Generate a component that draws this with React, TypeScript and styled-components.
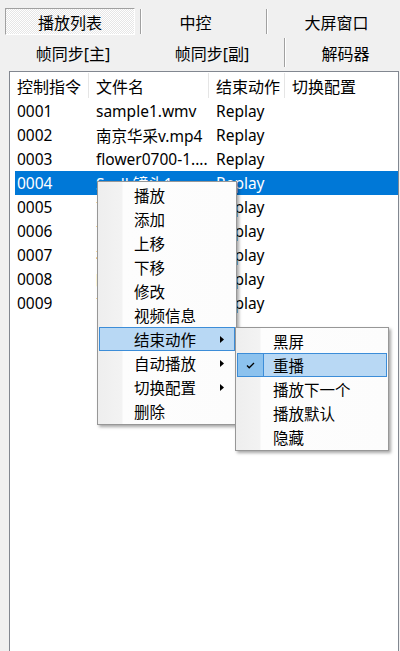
import styled, { createGlobalStyle } from "styled-components";

interface Clip {
  id: string;
  name: string;
  action: string;
}

const clips: Clip[] = [
  { id: "0001", name: "sample1.wmv", action: "Replay" },
  { id: "0002", name: "南京华采v.mp4", action: "Replay" },
  { id: "0003", name: "flower0700-1....", action: "Replay" },
  { id: "0004", name: "Scall 镜头1....", action: "Replay" },
  { id: "0005", name: "南京宣传片.mp4", action: "Replay" },
  { id: "0006", name: "南京夜景.mp4", action: "Replay" },
  { id: "0007", name: "视频素材.mp4", action: "Replay" },
  { id: "0008", name: "时代广场.mp4", action: "Replay" },
  { id: "0009", name: "南京片头.mp4", action: "Replay" },
];

const menuItems = [
  { label: "播放" },
  { label: "添加" },
  { label: "上移" },
  { label: "下移" },
  { label: "修改" },
  { label: "视频信息" },
  { label: "结束动作", sub: true, active: true },
  { label: "自动播放", sub: true },
  { label: "切换配置", sub: true },
  { label: "删除" },
];

const subItems = [
  { label: "黑屏" },
  { label: "重播", checked: true },
  { label: "播放下一个" },
  { label: "播放默认" },
  { label: "隐藏" },
];

const GlobalStyle = createGlobalStyle`
  body {
    margin: 0;
    background: #f0f0f0;
    font-family: "Segoe UI", "Noto Sans", "Noto Sans CJK SC", sans-serif;
    font-size: 15.5px;
    color: #000;
  }
`;

const Window = styled.div`
  position: relative;
  width: 400px;
  height: 651px;
  overflow: hidden;
  display: flex;
  flex-direction: column;
  background: #f0f0f0;
  box-sizing: border-box;
`;

const TabRow = styled.div<{ $top: number; $h: number }>`
  display: flex;
  margin-top: ${(p) => p.$top}px;
  height: ${(p) => p.$h}px;
  font-size: 16px;
`;

const TabCell = styled.div<{ $w: number; $divider?: boolean; $shift?: number }>`
  width: ${(p) => p.$w}px;
  flex: none;
  display: flex;
  align-items: center;
  justify-content: center;
  box-sizing: border-box;
  padding-left: ${(p) => Math.max(0, (p.$shift ?? 0) * 2)}px;
  padding-right: ${(p) => Math.max(0, -(p.$shift ?? 0) * 2)}px;
  border-left: ${(p) => (p.$divider ? "1px solid #a0a0a0" : "none")};
  box-shadow: ${(p) => (p.$divider ? "inset 1px 0 #ffffff" : "none")};
  margin: ${(p) => (p.$divider ? "1px 0" : "0")};
  white-space: nowrap;
`;

const SelectedFace = styled.div`
  flex: 1;
  align-self: stretch;
  margin: 0 5px;
  display: flex;
  align-items: center;
  justify-content: center;
  border-top: 1px solid #a0a0a0;
  border-left: 1px solid #a0a0a0;
  border-right: 1px solid #ffffff;
  border-bottom: 1px solid #ffffff;
  background: repeating-conic-gradient(#ffffff 0 25%, #e6e6e6 0 50%) 0 0 / 2px 2px;
`;

const ListView = styled.div`
  flex: 1;
  margin-top: 3px;
  margin-left: 9px;
  width: 390px;
  box-sizing: border-box;
  border: 1px solid #828790;
  border-bottom: none;
  background: #fff;
`;

const Header = styled.div`
  display: flex;
  height: 27px;
  padding: 1px 0;
  box-sizing: border-box;
  font-size: 16px;
`;

const HeadCell = styled.div<{ $w?: number }>`
  width: ${(p) => (p.$w ? `${p.$w}px` : "auto")};
  flex: ${(p) => (p.$w ? "none" : "1")};
  box-sizing: border-box;
  padding-left: 7px;
  display: flex;
  align-items: center;
  border-right: ${(p) => (p.$w ? "1px solid #e5e5e5" : "none")};
  white-space: nowrap;
`;

const Row = styled.div<{ $selected?: boolean }>`
  display: flex;
  height: 24px;
  margin-left: 5px;
  align-items: center;
  background: ${(p) => (p.$selected ? "#0078d7" : "transparent")};
  color: ${(p) => (p.$selected ? "#fff" : "#000")};
`;

const Cell = styled.div<{ $w?: number; $pad: number }>`
  width: ${(p) => (p.$w ? `${p.$w}px` : "auto")};
  flex: ${(p) => (p.$w ? "none" : "1")};
  box-sizing: border-box;
  padding-left: ${(p) => p.$pad}px;
  white-space: nowrap;
  overflow: hidden;
`;

const Menu = styled.div<{ $left: number; $top: number; $w: number }>`
  position: absolute;
  left: ${(p) => p.$left}px;
  top: ${(p) => p.$top}px;
  width: ${(p) => p.$w}px;
  box-sizing: border-box;
  padding: 1px;
  border: 1px solid #979797;
  background: linear-gradient(90deg, #eeeeee 0, #f3f3f3 24px, #fdfdfd 25px, #fcfcfc 100%);
  box-shadow: 2px 2px 3px rgba(0, 0, 0, 0.35);
`;

const MenuItem = styled.div<{ $active?: boolean; $pad: number }>`
  position: relative;
  height: 24px;
  box-sizing: border-box;
  display: flex;
  align-items: center;
  padding-left: ${(p) => p.$pad}px;
  border: 1px solid ${(p) => (p.$active ? "#3c8dd8" : "transparent")};
  background: ${(p) => (p.$active ? "#b8d8f4" : "transparent")};
  white-space: nowrap;
`;

const Arrow = styled.svg`
  position: absolute;
  right: 10px;
  top: 8px;
  width: 4px;
  height: 7px;
`;

const CheckBox = styled.div`
  position: absolute;
  left: 0;
  top: 0;
  bottom: 0;
  width: 25px;
  background: #8cc2ee;
  border-right: 1px solid #3c8dd8;
  display: flex;
  align-items: center;
  justify-content: center;
`;

export default function App(): JSX.Element {
  return (
    <Window>
      <GlobalStyle />
      <TabRow $top={8} $h={27}>
        <TabCell $w={140}>
          <SelectedFace>播放列表</SelectedFace>
        </TabCell>
        <TabCell $w={126} $divider $shift={-8}>
          中控
        </TabCell>
        <TabCell $w={134} $divider $shift={3}>
          大屏窗口
        </TabCell>
      </TabRow>
      <TabRow $top={2} $h={31}>
        <TabCell $w={142} $shift={2}>
          帧同步[主]
        </TabCell>
        <TabCell $w={142} $shift={-1}>
          帧同步[副]
        </TabCell>
        <TabCell $w={116} $divider $shift={3}>
          解码器
        </TabCell>
      </TabRow>
      <ListView>
        <Header>
          <HeadCell $w={79}>控制指令</HeadCell>
          <HeadCell $w={120}>文件名</HeadCell>
          <HeadCell $w={76}>结束动作</HeadCell>
          <HeadCell>切换配置</HeadCell>
        </Header>
        {clips.map((c) => (
          <Row key={c.id} $selected={c.id === "0004"}>
            <Cell $w={74} $pad={2}>
              {c.id}
            </Cell>
            <Cell $w={120} $pad={7}>
              {c.name}
            </Cell>
            <Cell $w={76} $pad={7}>
              {c.action}
            </Cell>
            <Cell $pad={7} />
          </Row>
        ))}
      </ListView>

      <Menu $left={97} $top={181} $w={140}>
        {menuItems.map((m) => (
          <MenuItem key={m.label} $active={m.active} $pad={34}>
            {m.label}
            {m.sub && (
              <Arrow viewBox="0 0 4 7">
                <path d="M0 0L4 3.5L0 7Z" fill="#000" />
              </Arrow>
            )}
          </MenuItem>
        ))}
      </Menu>

      <Menu $left={235} $top={327} $w={154}>
        {subItems.map((s) => (
          <MenuItem key={s.label} $active={s.checked} $pad={35}>
            {s.checked && (
              <CheckBox>
                <svg width="9" height="7" viewBox="0 0 9 7">
                  <path d="M1 3.5L3.2 5.8L8 1" fill="none" stroke="#000" strokeWidth="1.3" />
                </svg>
              </CheckBox>
            )}
            {s.label}
          </MenuItem>
        ))}
      </Menu>
    </Window>
  );
}
